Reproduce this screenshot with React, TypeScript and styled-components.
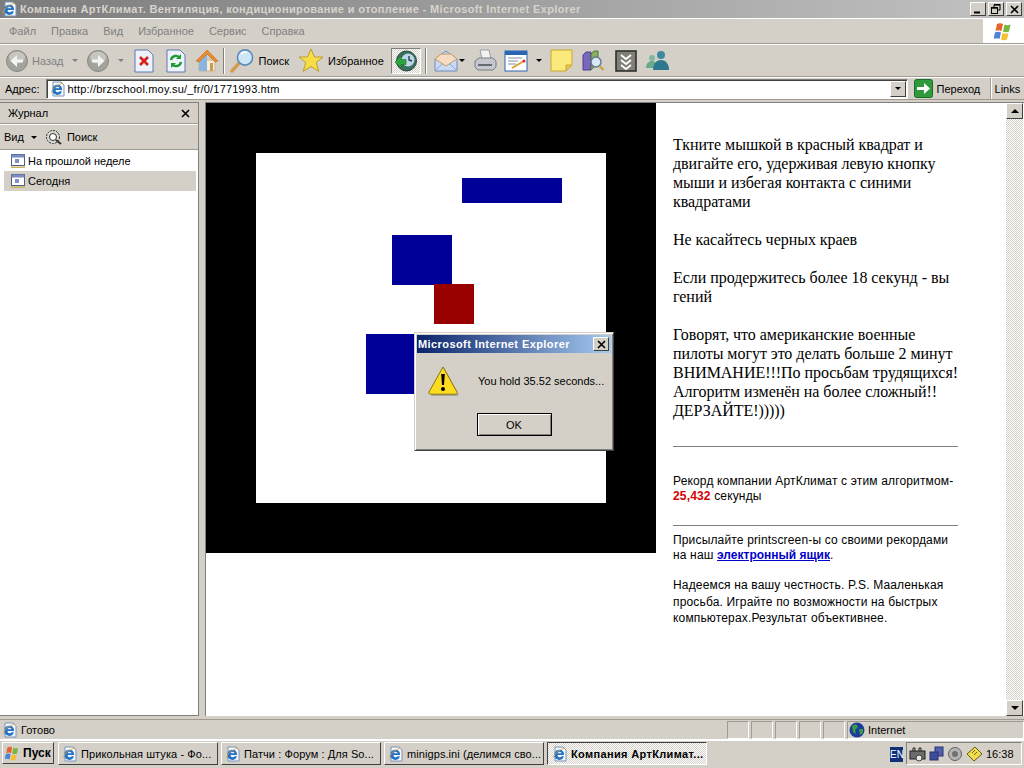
import React from "react";
import styled, { createGlobalStyle } from "styled-components";

const GlobalStyle = createGlobalStyle`
  html, body { margin: 0; padding: 0; overflow: hidden; background: #d4d0c8; }
  #root { width: 1024px; height: 768px; }
`;

const Screen = styled.div`
  width: 1024px;
  height: 768px;
  display: flex;
  flex-direction: column;
  background: #d4d0c8;
  font-family: "Liberation Sans", Arial, sans-serif;
  font-size: 11px;
  color: #000;
  overflow: hidden;
  position: relative;
`;

const TitleBar = styled.div`
  height: 18px;
  flex: none;
  display: flex;
  align-items: center;
  padding: 0 2px;
  gap: 2px;
  background: linear-gradient(90deg, #7c7c7c, #c2c2c2);
`;

const TitleText = styled.div`
  flex: 1;
  color: #d8d4cc;
  font-weight: bold;
  font-size: 11px;
  letter-spacing: 0.37px;
  white-space: nowrap;
`;

const WinButton = styled.div`
  width: 16px;
  height: 14px;
  background: #d4d0c8;
  border: 1px solid;
  border-color: #fff #404040 #404040 #fff;
  box-sizing: border-box;
  display: flex;
  align-items: center;
  justify-content: center;
`;

const MenuBar = styled.div`
  height: 26px;
  flex: none;
  display: flex;
  align-items: center;
  border-top: 1px solid #fff;
  border-bottom: 1px solid #a09c94;
  box-sizing: border-box;
  padding-left: 9px;
  gap: 15px;
  color: #808080;
`;

const MenuItem = styled.span`
  font-size: 11px;
`;

const FlagBox = styled.div`
  margin-left: auto;
  width: 41px;
  align-self: stretch;
  background: #fff;
  display: flex;
  align-items: center;
  justify-content: center;
`;

const ToolBar = styled.div`
  height: 33px;
  flex: none;
  display: flex;
  align-items: center;
  padding-left: 6px;
  border-top: 1px solid #fff;
  border-bottom: 1px solid #a09c94;
  box-sizing: border-box;
`;

const ToolLabel = styled.span<{ $muted?: boolean }>`
  font-size: 11px;
  color: ${(p) => (p.$muted ? "#808080" : "#000")};
  margin-left: 4px;
`;

const Slot = styled.div<{ $w: number; $ml?: number }>`
  width: ${(p) => p.$w}px;
  margin-left: ${(p) => p.$ml ?? 0}px;
  flex: none;
  height: 26px;
  display: flex;
  align-items: center;
  justify-content: center;
`;

const Pressed = styled(Slot)`
  border: 1px solid;
  border-color: #808080 #fff #fff #808080;
  box-sizing: border-box;
  background-color: #e8e6e0;
  background-image: repeating-conic-gradient(#d4d0c8 0 25%, #fff 0 50%);
  background-size: 2px 2px;
`;

const Divider = styled.div`
  width: 2px;
  height: 26px;
  flex: none;
  margin: 0 5px 0 4px;
  border-left: 1px solid #808080;
  border-right: 1px solid #fff;
  box-sizing: border-box;
`;

const Caret = styled.span<{ $color?: string }>`
  width: 0;
  height: 0;
  flex: none;
  border-left: 3px solid transparent;
  border-right: 3px solid transparent;
  border-top: 3px solid ${(p) => p.$color || "#000"};
`;

const AddressBar = styled.div`
  height: 23px;
  flex: none;
  display: flex;
  align-items: center;
  padding: 0 0 0 5px;
  border-top: 1px solid #fff;
  border-bottom: 1px solid #a09c94;
  box-sizing: border-box;
`;

const AddressField = styled.div`
  margin-left: 6px;
  width: 862px;
  height: 20px;
  flex: none;
  box-sizing: border-box;
  background: #fff;
  border: 1px solid;
  border-color: #808080 #fff #fff #808080;
  box-shadow: inset 1px 1px 0 #404040;
  display: flex;
  align-items: center;
  padding-left: 3px;
  gap: 2px;
  font-size: 11px;
  letter-spacing: 0.18px;
  position: relative;
`;

const ComboButton = styled.div`
  position: absolute;
  right: 1px;
  top: 1px;
  width: 16px;
  height: 16px;
  box-sizing: border-box;
  background: #d4d0c8;
  border: 1px solid;
  border-color: #fff #404040 #404040 #fff;
  display: flex;
  align-items: center;
  justify-content: center;
`;

const GoButton = styled.div`
  margin-left: 6px;
  display: flex;
  align-items: center;
  gap: 4px;
  width: 76px;
  flex: none;
  font-size: 11px;
`;

const LinksLabel = styled.div`
  flex: 1;
  height: 21px;
  display: flex;
  align-items: center;
  padding-left: 4px;
  border-left: 1px solid #a09c94;
  box-shadow: inset 1px 0 0 #fff;
  font-size: 11px;
`;

const Body = styled.div`
  flex: 1;
  display: flex;
  min-height: 0;
  padding: 2px 0 3px;
`;

const Sidebar = styled.div`
  width: 199px;
  flex: none;
  display: flex;
  flex-direction: column;
  box-sizing: border-box;
  border: 1px solid #808080;
  border-left: none;
  background: #fff;
`;

const SideHead = styled.div`
  height: 21px;
  flex: none;
  box-sizing: border-box;
  display: flex;
  align-items: center;
  justify-content: space-between;
  padding: 0 8px;
  background: #d4d0c8;
  border-bottom: 1px solid #a09c94;
  font-size: 11px;
`;

const SideTools = styled.div`
  height: 26px;
  flex: none;
  box-sizing: border-box;
  display: flex;
  align-items: center;
  padding-left: 4px;
  background: #d4d0c8;
  border-top: 1px solid #fff;
  border-bottom: 1px solid #a09c94;
  font-size: 11px;
`;

const SideList = styled.div`
  flex: 1;
  padding: 1px 2px 1px 4px;
  display: flex;
  flex-direction: column;
`;

const HistoryRow = styled.div<{ $active?: boolean }>`
  height: 20px;
  display: flex;
  align-items: center;
  gap: 2px;
  padding-left: 6px;
  background: ${(p) => (p.$active ? "#d4d0c8" : "transparent")};
  font-size: 11px;
`;

const Page = styled.div`
  margin-left: 6px;
  flex: 1;
  min-width: 0;
  display: flex;
  background: #fff;
  border-top: 1px solid #808080;
  border-left: 1px solid #808080;
`;

const PageContent = styled.div`
  flex: 1;
  display: flex;
  align-items: flex-start;
  min-width: 0;
`;

const GameBoard = styled.div`
  width: 450px;
  height: 450px;
  flex: none;
  background: #000;
  position: relative;
`;

const Arena = styled.div`
  position: absolute;
  left: 50px;
  top: 50px;
  width: 350px;
  height: 350px;
  background: #fff;
`;

const Block = styled.div<{ $x: number; $y: number; $w: number; $h: number; $color: string }>`
  position: absolute;
  left: ${(p) => p.$x}px;
  top: ${(p) => p.$y}px;
  width: ${(p) => p.$w}px;
  height: ${(p) => p.$h}px;
  background: ${(p) => p.$color};
`;

const Notes = styled.div`
  width: 285px;
  flex: none;
  margin-left: 17px;
  padding-top: 32px;
`;

const SerifText = styled.p`
  margin: 0 0 19px;
  font-family: "Liberation Serif", "Times New Roman", serif;
  font-size: 16px;
  line-height: 19px;
  letter-spacing: -0.04px;
  white-space: nowrap;
  color: #000;
`;

const Rule = styled.hr<{ $top: number }>`
  margin: ${(p) => p.$top}px 0 0;
  height: 0;
  border: none;
  border-top: 1px solid #808080;
`;

const SansText = styled.p<{ $top?: number; $lh?: number }>`
  margin: ${(p) => p.$top ?? 0}px 0 0;
  font-size: 12px;
  line-height: ${(p) => p.$lh ?? 15}px;
  letter-spacing: 0.16px;
  white-space: nowrap;
  color: #000;
`;

const RedNumber = styled.b`
  color: #d40000;
`;

const MailLink = styled.a`
  color: #0000c8;
  font-weight: bold;
  letter-spacing: 0;
  text-decoration: underline;
`;

const ScrollBar = styled.div`
  width: 17px;
  flex: none;
  margin-right: 1px;
  display: flex;
  flex-direction: column;
  justify-content: space-between;
  background-color: #eee;
  background-image: repeating-conic-gradient(#d4d0c8 0 25%, #fff 0 50%);
  background-size: 2px 2px;
`;

const ScrollArrow = styled.div<{ $up?: boolean }>`
  width: 17px;
  height: 16px;
  box-sizing: border-box;
  background: #d4d0c8;
  border: 1px solid;
  border-color: #fff #404040 #404040 #fff;
  display: flex;
  align-items: center;
  justify-content: center;
  span {
    width: 0;
    height: 0;
    border-left: 4px solid transparent;
    border-right: 4px solid transparent;
    ${(p) => (p.$up ? "border-bottom: 4px solid #000;" : "border-top: 4px solid #000;")}
  }
`;

const StatusBar = styled.div`
  height: 21px;
  flex: none;
  display: flex;
  align-items: center;
  box-sizing: border-box;
  border-top: 1px solid #a09c94;
  border-bottom: 1px solid #fff;
  padding-left: 2px;
  font-size: 11px;
`;

const StatusText = styled.div`
  flex: 1;
  margin-left: 3px;
`;

const StatusCell = styled.div<{ $w: number }>`
  width: ${(p) => p.$w}px;
  height: 18px;
  flex: none;
  box-sizing: border-box;
  border: 1px solid;
  border-color: #a09c94 #fff #fff #a09c94;
  margin-left: 2px;
  display: flex;
  align-items: center;
  gap: 3px;
  padding-left: 1px;
`;

const TaskBar = styled.div`
  height: 28px;
  flex: none;
  box-sizing: border-box;
  display: flex;
  align-items: flex-start;
  padding: 1px 0 0 2px;
  gap: 3px;
  font-size: 11px;
  border-top: 1px solid #fff;
`;

const StartButton = styled.div`
  width: 52px;
  height: 22px;
  flex: none;
  box-sizing: border-box;
  border: 1px solid;
  border-color: #fff #404040 #404040 #fff;
  display: flex;
  align-items: center;
  gap: 2px;
  padding-left: 2px;
  font-weight: bold;
  font-size: 12px;
  margin-right: 1px;
`;

const TaskButton = styled.div<{ $active?: boolean }>`
  width: 160px;
  height: 23px;
  flex: none;
  box-sizing: border-box;
  border: 1px solid;
  border-color: ${(p) => (p.$active ? "#404040 #fff #fff #404040" : "#fff #404040 #404040 #fff")};
  display: flex;
  align-items: center;
  gap: 3px;
  padding-left: ${(p) => (p.$active ? 4 : 3)}px;
  white-space: nowrap;
  overflow: hidden;
  font-weight: ${(p) => (p.$active ? "bold" : "normal")};
  letter-spacing: ${(p) => (p.$active ? 0.35 : 0.08)}px;
  ${(p) =>
    p.$active
      ? `background-image: repeating-conic-gradient(#d4d0c8 0 25%, #fff 0 50%); background-size: 2px 2px;`
      : ""}
`;

const LangBadge = styled.div`
  margin: 5px 0 0 auto;
  width: 13px;
  height: 15px;
  background: #10307a;
  color: #fff;
  font-size: 10px;
  line-height: 15px;
  overflow: hidden;
  flex: none;
`;

const Tray = styled.div`
  width: 116px;
  height: 23px;
  flex: none;
  box-sizing: border-box;
  border: 1px solid;
  border-color: #808080 #fff #fff #808080;
  display: flex;
  align-items: center;
  padding-left: 2px;
  gap: 2px;
  margin-right: 2px;
`;

const Clock = styled.span`
  margin-left: 1px;
`;

const Dialog = styled.div`
  position: absolute;
  left: 414px;
  top: 332px;
  width: 200px;
  height: 119px;
  box-sizing: border-box;
  background: #d4d0c8;
  border: 1px solid;
  border-color: #d4d0c8 #404040 #404040 #d4d0c8;
  box-shadow: inset 1px 1px 0 #fff, inset -1px -1px 0 #808080;
  padding: 2px;
  display: flex;
  flex-direction: column;
`;

const DialogTitle = styled.div`
  height: 18px;
  flex: none;
  display: flex;
  align-items: center;
  justify-content: space-between;
  padding: 0 2px 0 1px;
  color: #fff;
  font-weight: bold;
  font-size: 11px;
  letter-spacing: 0.42px;
  white-space: nowrap;
  background: linear-gradient(90deg, #0a246a, #a6caf0);
`;

const DialogBody = styled.div`
  display: flex;
  align-items: center;
  padding: 12px 0 0 11px;
  gap: 18px;
  font-size: 11px;
`;

const OkButton = styled.div`
  align-self: center;
  margin-top: 16px;
  width: 75px;
  height: 23px;
  box-sizing: border-box;
  border: 1px solid #000;
  box-shadow: inset 1px 1px 0 #fff, inset -1px -1px 0 #808080;
  display: flex;
  align-items: center;
  justify-content: center;
  font-size: 11px;
`;

/* icons */
const IeIcon = ({ size = 16 }: { size?: number }) => (
  <svg width={size} height={size} viewBox="0 0 16 16">
    <path d="M3 1h8l3 3v11H3z" fill="#f6f8fc" stroke="#7b93b8" />
    <path
      d="M2.500 8.500a4.800 4.800 0 0 1 9.500-1v1.500H5.500a2.300 2.300 0 0 0 4.200 1.300h2.200a4.800 4.800 0 0 1-9.400-1.800z"
      fill="#2472c4"
    />
    <path d="M5.500 7.300a2.200 2.200 0 0 1 4.200 0z" fill="#e8f0fa" />
    <path d="M1 12c1-4 5-8 12-10" fill="none" stroke="#e2a93c" strokeWidth="0.8" />
  </svg>
);

const NavArrow = ({ flip }: { flip?: boolean }) => (
  <svg width="22" height="22" viewBox="0 0 22 22">
    <circle cx="11" cy="11" r="10.500" fill="#a3a39d" stroke="#8a8880" />
    <ellipse cx="11" cy="7.500" rx="8" ry="6" fill="#c6c6c0" />
    <path
      d={flip ? "M5 9.500h6V5l6.500 6-6.500 6v-4.500H5z" : "M17 9.500h-6V5l-6.500 6 6.500 6v-4.500h6z"}
      fill="#f4f4f2"
    />
  </svg>
);

const StopIcon = () => (
  <svg width="20" height="24" viewBox="0 0 20 24">
    <path d="M1 1h13l5 5v17H1z" fill="#eef2fb" stroke="#5d78b4" />
    <path d="M6 8l8 8M14 8l-8 8" stroke="#d8201c" strokeWidth="2.600" />
  </svg>
);

const RefreshIcon = () => (
  <svg width="20" height="24" viewBox="0 0 20 24">
    <path d="M1 1h13l5 5v17H1z" fill="#eef2fb" stroke="#5d78b4" />
    <path d="M5 11a5 5 0 0 1 9-2" fill="none" stroke="#1e9a34" strokeWidth="2.400" />
    <path d="M15 5v5h-5z" fill="#1e9a34" />
    <path d="M15 13a5 5 0 0 1-9 2" fill="none" stroke="#1e9a34" strokeWidth="2.400" />
    <path d="M5 19v-5h5z" fill="#1e9a34" />
  </svg>
);

const HomeIcon = () => (
  <svg width="24" height="25" viewBox="0 0 24 25">
    <path d="M4 12h16v11H4z" fill="#f6ecd2" stroke="#c8b48c" />
    <path d="M4 12l8-8v19H4z" fill="#8cb4e0" />
    <path d="M1 13L12 2l11 11-3 1-8-8-8 8z" fill="#ea8b2c" stroke="#bc6a1e" strokeWidth="0.600" />
    <rect x="15" y="15" width="3" height="8" fill="#c99a5c" />
  </svg>
);

const SearchIcon = () => (
  <svg width="25" height="25" viewBox="0 0 25 25">
    <path d="M10 14L2 23" stroke="#d49a50" strokeWidth="3.400" strokeLinecap="round" />
    <circle cx="15" cy="9.500" r="7.600" fill="#cfe6f6" stroke="#5a8cc0" strokeWidth="1.600" />
    <path d="M11 6a5 5 0 0 1 6-1.500" stroke="#fff" strokeWidth="1.600" fill="none" />
  </svg>
);

const StarIcon = () => (
  <svg width="26" height="25" viewBox="0 0 26 25">
    <path
      d="M13 1l3.500 8H25l-6.800 5.400 2.600 9L13 18.500 5.200 23.400l2.600-9L1 9h8.500z"
      fill="#f8dc48"
      stroke="#b8a030"
    />
  </svg>
);

const HistoryIcon = () => (
  <svg width="24" height="24" viewBox="0 0 24 24">
    <circle cx="12.500" cy="12" r="10" fill="#3c6e5c" stroke="#24483c" />
    <circle cx="14" cy="11" r="6.500" fill="#bcd6e8" />
    <path d="M15 7v4l3 1" stroke="#243c50" strokeWidth="1.400" fill="none" />
    <path d="M1 13l6-6v3.500h5v5H7V19z" fill="#2ea43c" stroke="#1c7028" strokeWidth="0.600" />
  </svg>
);

const MailIcon = () => (
  <svg width="24" height="24" viewBox="0 0 24 24">
    <path d="M1 10L12 2l11 8v12H1z" fill="#c8daf4" stroke="#6f8cba" />
    <path d="M1 10l11 7 11-7-6-5H7z" fill="#f6dcc0" stroke="#c69a68" />
    <path d="M1 22l8-8M23 22l-8-8" stroke="#8fa8cc" />
  </svg>
);

const PrintIcon = () => (
  <svg width="25" height="25" viewBox="0 0 25 25">
    <path d="M7 2h9l2 9H9z" fill="#f2f2f2" stroke="#9aa0a8" />
    <path d="M2 13l4-3h14l3 3v6l-3 3H5l-3-3z" fill="#c4c8cc" stroke="#787c84" />
    <rect x="5" y="16" width="14" height="2" fill="#666a70" />
  </svg>
);

const EditIcon = () => (
  <svg width="24" height="22" viewBox="0 0 24 22">
    <rect x="1" y="1" width="22" height="20" fill="#fff" stroke="#2a64b4" />
    <rect x="1" y="1" width="22" height="4" fill="#2a64b4" />
    <path d="M4 8h14M4 11h10M4 14h8" stroke="#8090a8" />
    <path d="M8 18l12-7" stroke="#d8a030" strokeWidth="2" />
    <circle cx="20" cy="11" r="1.500" fill="#d83020" />
  </svg>
);

const NoteIcon = () => (
  <svg width="23" height="23" viewBox="0 0 23 23">
    <path d="M1 1h21v15l-6 6H1z" fill="#fbe97c" stroke="#c8a828" />
    <path d="M22 16h-6v6z" fill="#e8c850" stroke="#c8a828" />
  </svg>
);

const ResearchIcon = () => (
  <svg width="24" height="24" viewBox="0 0 24 24">
    <path d="M2 6l3-3h5v18H2z" fill="#7a68c0" stroke="#4a3c88" />
    <path d="M10 5l3-3h4v12l-7 7z" fill="#8ab060" stroke="#50703c" />
    <circle cx="15" cy="13" r="5" fill="#d8e8f4" stroke="#607890" strokeWidth="1.400" />
    <path d="M18.500 17l4 4" stroke="#c8a040" strokeWidth="2.200" />
  </svg>
);

const ChevronIcon = () => (
  <svg width="22" height="22" viewBox="0 0 22 22">
    <rect x="1" y="1" width="20" height="20" fill="#808078" stroke="#303030" strokeWidth="1.600" />
    <path d="M6 5l5 4 5-4M6 10l5 4 5-4M6 15l5 4 5-4" stroke="#fff" strokeWidth="1.800" fill="none" />
  </svg>
);

const PeopleIcon = () => (
  <svg width="24" height="22" viewBox="0 0 24 22">
    <circle cx="6" cy="8" r="3" fill="#7fb8a0" />
    <path d="M0 18c0-5 3-7 6-7s5 2 5 7z" fill="#6aa890" />
    <circle cx="15" cy="5" r="4" fill="#3c88a0" />
    <path d="M7 20c0-7 4-10 8-10s8 3 8 10z" fill="#2c7890" />
  </svg>
);

const GoIcon = () => (
  <svg width="19" height="19" viewBox="0 0 19 19">
    <rect x="0.500" y="0.500" width="18" height="18" rx="2" fill="#2f9a3c" stroke="#1c6c28" />
    <path d="M3 8h7V4l6 5.500-6 5.500v-4H3z" fill="#fff" />
  </svg>
);

const WinFlag = ({ size = 20 }: { size?: number }) => (
  <svg width={size} height={size} viewBox="0 0 20 20">
    <path d="M3 3c2-1 4-1 6 0L7.500 10c-2-1-4-1-6 0z" fill="#e8642c" />
    <path d="M10.500 3.500c2 1 4 1 6 0L15 10.500c-2 1-4 1-6 0z" fill="#74b83c" />
    <path d="M1 11.500c2-1 4-1 6 0L5.500 18c-2-1-3.500-1-6 0z" fill="#4c84d8" />
    <path d="M8.500 12c2 1 4 1 6 0L13 18.500c-2 1-4 1-6 0z" fill="#f4c030" />
  </svg>
);

const CalendarIcon = () => (
  <svg width="16" height="16" viewBox="0 0 16 16">
    <rect x="1.500" y="1.500" width="13" height="11" fill="#fff" stroke="#4c5c8c" />
    <rect x="1.500" y="1.500" width="13" height="3" fill="#7a8cc0" />
    <rect x="5" y="6" width="4" height="4" fill="#8090c8" />
    <path d="M1 13.500h14v1.500H1z" fill="#c8b45c" />
  </svg>
);

const SearchGear = () => (
  <svg width="18" height="16" viewBox="0 0 18 16">
    <circle cx="8" cy="8" r="6.500" fill="#d8d8d0" stroke="#303030" strokeDasharray="2 1" />
    <circle cx="8" cy="8" r="3.500" fill="#fff" stroke="#303030" />
    <path d="M11 11l5 4" stroke="#303030" strokeWidth="2" />
  </svg>
);

const CloseGlyph = ({ size = 9 }: { size?: number }) => (
  <svg width={size} height={size} viewBox="0 0 9 9">
    <path d="M1 1l7 7M8 1l-7 7" stroke="#000" strokeWidth="1.600" />
  </svg>
);

const RestoreGlyph = () => (
  <svg width="10" height="10" viewBox="0 0 10 10">
    <path d="M3 1h6v5H7M3 1v2" fill="none" stroke="#000" />
    <path d="M3 0.500h6.500" stroke="#000" strokeWidth="1.400" />
    <rect x="0.500" y="3.500" width="6" height="6" fill="none" stroke="#000" />
    <path d="M0 4h7" stroke="#000" strokeWidth="1.400" />
  </svg>
);

const MinGlyph = () => (
  <svg width="10" height="10" viewBox="0 0 10 10">
    <path d="M1 8.500h6" stroke="#000" strokeWidth="2" />
  </svg>
);

const WarningIcon = () => (
  <svg width="32" height="32" viewBox="0 0 32 32">
    <path d="M15.500 2l14 26a1.500 1.500 0 0 1-1 2H3a1.500 1.500 0 0 1-1-2z" fill="#808080" opacity="0.5" transform="translate(1 1)" />
    <path d="M15 2l14 25a1.500 1.500 0 0 1-1.300 2.200H2.300A1.500 1.500 0 0 1 1 27z" fill="#fbdc20" stroke="#8a7410" />
    <path d="M13.200 9h3.600l-.8 11h-2z" fill="#000" />
    <circle cx="15" cy="24" r="2" fill="#000" />
  </svg>
);

const GlobeIcon = () => (
  <svg width="16" height="16" viewBox="0 0 16 16">
    <circle cx="8" cy="8" r="7.500" fill="#1c3c9c" />
    <path d="M3 4l4-2 2 3-3 3 1 4-3-2zM10 7l4 0 0 4-3 2z" fill="#38a040" />
  </svg>
);

const TrayIcon = ({ kind }: { kind: "cam" | "net" | "sound" | "key" }) => (
  <svg width="17" height="16" viewBox="0 0 17 16">
    {kind === "cam" && (
      <>
        <rect x="1" y="5" width="15" height="8" fill="#6c6c6c" stroke="#202020" />
        <circle cx="10" cy="12" r="3" fill="#e8e8e8" stroke="#404040" />
        <path d="M4 5V2h2v3M10 5V2h2v3" stroke="#202020" fill="none" />
      </>
    )}
    {kind === "net" && (
      <>
        <rect x="7" y="1" width="8" height="9" fill="#5060b0" stroke="#283070" />
        <rect x="2" y="6" width="8" height="8" fill="#3c4c9c" stroke="#283070" />
      </>
    )}
    {kind === "sound" && (
      <>
        <circle cx="8" cy="8" r="6.500" fill="#b4b4b4" stroke="#606060" />
        <circle cx="8" cy="8" r="3" fill="#707070" />
      </>
    )}
    {kind === "key" && (
      <>
        <path d="M9 1l7 7-8 7-7-7z" fill="#f0dc50" stroke="#6c5c10" />
        <path d="M6 7l3-3M8 9l3-3" stroke="#6c5c10" />
      </>
    )}
  </svg>
);

const HISTORY = ["На прошлой неделе", "Сегодня"];
const MENU = ["Файл", "Правка", "Вид", "Избранное", "Сервис", "Справка"];
const TASKS = [
  "Прикольная штука - Фо...",
  "Патчи : Форум : Для So...",
  "minigps.ini (делимся сво...",
];

export default function App() {
  return (
    <Screen>
      <GlobalStyle />
      <TitleBar>
        <IeIcon />
        <TitleText>Компания АртКлимат. Вентиляция, кондиционирование и отопление - Microsoft Internet Explorer</TitleText>
        <WinButton><MinGlyph /></WinButton>
        <WinButton><RestoreGlyph /></WinButton>
        <WinButton><CloseGlyph /></WinButton>
      </TitleBar>

      <MenuBar>
        {MENU.map((m) => (
          <MenuItem key={m}>{m}</MenuItem>
        ))}
        <FlagBox><WinFlag /></FlagBox>
      </MenuBar>

      <ToolBar>
        <NavArrow />
        <ToolLabel $muted>Назад</ToolLabel>
        <Slot $w={6} $ml={8}><Caret $color="#808080" /></Slot>
        <Slot $w={22} $ml={9}><NavArrow flip /></Slot>
        <Slot $w={6} $ml={9}><Caret $color="#808080" /></Slot>
        <Slot $w={20} $ml={10}><StopIcon /></Slot>
        <Slot $w={20} $ml={12}><RefreshIcon /></Slot>
        <Slot $w={24} $ml={9}><HomeIcon /></Slot>
        <Divider />
        <Slot $w={25}><SearchIcon /></Slot>
        <ToolLabel>Поиск</ToolLabel>
        <Slot $w={26} $ml={9}><StarIcon /></Slot>
        <ToolLabel>Избранное</ToolLabel>
        <Pressed $w={30} $ml={7}><HistoryIcon /></Pressed>
        <Divider />
        <Slot $w={24} $ml={2}><MailIcon /></Slot>
        <Slot $w={6} $ml={1}><Caret /></Slot>
        <Slot $w={25} $ml={8}><PrintIcon /></Slot>
        <Slot $w={24} $ml={6}><EditIcon /></Slot>
        <Slot $w={6} $ml={8}><Caret /></Slot>
        <Slot $w={23} $ml={8}><NoteIcon /></Slot>
        <Slot $w={24} $ml={8}><ResearchIcon /></Slot>
        <Slot $w={22} $ml={10}><ChevronIcon /></Slot>
        <Slot $w={24} $ml={9}><PeopleIcon /></Slot>
      </ToolBar>

      <AddressBar>
        <span>Адрес:</span>
        <AddressField>
          <IeIcon />
          http://brzschool.moy.su/_fr/0/1771993.htm
          <ComboButton><Caret /></ComboButton>
        </AddressField>
        <GoButton>
          <GoIcon />
          Переход
        </GoButton>
        <LinksLabel>Links</LinksLabel>
      </AddressBar>

      <Body>
        <Sidebar>
          <SideHead>
            Журнал
            <CloseGlyph />
          </SideHead>
          <SideTools>
            Вид
            <Slot $w={21}><Caret /></Slot>
            <SearchGear />
            <ToolLabel>Поиск</ToolLabel>
          </SideTools>
          <SideList>
            {HISTORY.map((h, i) => (
              <HistoryRow key={h} $active={i === 1}>
                <CalendarIcon />
                {h}
              </HistoryRow>
            ))}
          </SideList>
        </Sidebar>

        <Page>
          <PageContent>
            <GameBoard>
              <Arena>
                <Block $x={206} $y={25} $w={100} $h={25} $color="#000099" />
                <Block $x={136} $y={82} $w={60} $h={50} $color="#000099" />
                <Block $x={110} $y={181} $w={60} $h={60} $color="#000099" />
                <Block $x={178} $y={131} $w={40} $h={40} $color="#990000" />
              </Arena>
            </GameBoard>
            <Notes>
              <SerifText>
                Ткните мышкой в красный квадрат и
                <br />
                двигайте его, удерживая левую кнопку
                <br />
                мыши и избегая контакта с синими
                <br />
                квадратами
              </SerifText>
              <SerifText>Не касайтесь черных краев</SerifText>
              <SerifText>
                Если продержитесь более 18 секунд - вы
                <br />
                гений
              </SerifText>
              <SerifText>
                Говорят, что американские военные
                <br />
                пилоты могут это делать больше 2 минут
                <br />
                ВНИМАНИЕ!!!По просьбам трудящихся!
                <br />
                Алгоритм изменён на более сложный!!
                <br />
                ДЕРЗАЙТЕ!)))))
              </SerifText>
              <Rule $top={26} />
              <SansText $top={27}>
                Рекорд компании АртКлимат с этим алгоритмом-
                <br />
                <RedNumber>25,432</RedNumber> секунды
              </SansText>
              <Rule $top={21} />
              <SansText $top={7}>
                Присылайте printscreen-ы со своими рекордами
                <br />
                на наш <MailLink>электронный ящик</MailLink>.
              </SansText>
              <SansText $top={14} $lh={16.5}>
                Надеемся на вашу честность. P.S. Мааленькая
                <br />
                просьба. Играйте по возможности на быстрых
                <br />
                компьютерах.Результат объективнее.
              </SansText>
            </Notes>
          </PageContent>
          <ScrollBar>
            <ScrollArrow $up><span /></ScrollArrow>
            <ScrollArrow><span /></ScrollArrow>
          </ScrollBar>
        </Page>
      </Body>

      <StatusBar>
        <IeIcon />
        <StatusText>Готово</StatusText>
        <StatusCell $w={22} />
        <StatusCell $w={22} />
        <StatusCell $w={22} />
        <StatusCell $w={22} />
        <StatusCell $w={22} />
        <StatusCell $w={177}>
          <GlobeIcon />
          Internet
        </StatusCell>
      </StatusBar>

      <TaskBar>
        <StartButton>
          <WinFlag size={16} />
          Пуск
        </StartButton>
        {TASKS.map((t) => (
          <TaskButton key={t}>
            <IeIcon />
            {t}
          </TaskButton>
        ))}
        <TaskButton $active>
          <IeIcon />
          Компания АртКлимат...
        </TaskButton>
        <LangBadge>EN</LangBadge>
        <Tray>
          <TrayIcon kind="cam" />
          <TrayIcon kind="net" />
          <TrayIcon kind="sound" />
          <TrayIcon kind="key" />
          <Clock>16:38</Clock>
        </Tray>
      </TaskBar>

      <Dialog>
        <DialogTitle>
          Microsoft Internet Explorer
          <WinButton><CloseGlyph /></WinButton>
        </DialogTitle>
        <DialogBody>
          <WarningIcon />
          You hold 35.52 seconds...
        </DialogBody>
        <OkButton>OK</OkButton>
      </Dialog>
    </Screen>
  );
}
